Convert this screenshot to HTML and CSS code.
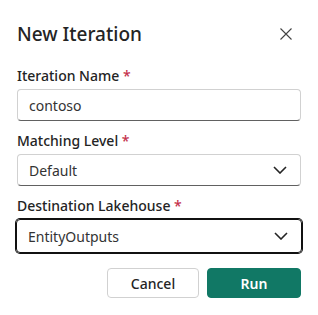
FILE: index.html
```html
<!DOCTYPE html>
<html>
<head>
    <title>New Iteration</title>
    <link rel="stylesheet" href="styles.css">
</head>
<body>
    <div class="dialog">
        <div class="dialog-header">
            <h1 class="dialog-title">New Iteration</h1>
            <button class="close-btn" aria-label="Close">
                <svg width="12" height="12" viewBox="0 0 12 12">
                    <path d="M0.5 0.5 L11.5 11.5 M11.5 0.5 L0.5 11.5" stroke="#424242" stroke-width="1.1" fill="none"/>
                </svg>
            </button>
        </div>

        <div class="field">
            <label for="name">Iteration Name <span class="req">*</span></label>
            <div class="control">
                <input type="text" id="name" value="contoso">
            </div>
        </div>

        <div class="field">
            <label>Matching Level <span class="req">*</span></label>
            <div class="control dropdown">
                <span>Default</span>
                <svg class="chevron" width="14" height="8" viewBox="0 0 14 8">
                    <path d="M1 1 L7 7 L13 1" stroke="#242424" stroke-width="1.6" fill="none"/>
                </svg>
            </div>
        </div>

        <div class="field">
            <label>Destination Lakehouse <span class="req">*</span></label>
            <div class="control dropdown focused">
                <span>EntityOutputs</span>
                <svg class="chevron" width="14" height="8" viewBox="0 0 14 8">
                    <path d="M1 1 L7 7 L13 1" stroke="#242424" stroke-width="1.6" fill="none"/>
                </svg>
            </div>
        </div>

        <div class="actions">
            <button class="btn">Cancel</button>
            <button class="btn primary">Run</button>
        </div>
    </div>
</body>
</html>
```

FILE: styles.css
```css
body {
    margin: 0;
    background: #fff;
    font-family: "Noto Sans", "Open Sans", sans-serif;
    color: #242424;
}
.dialog {
    padding: 20px 17px 0 17px;
}
.dialog-header {
    display: flex;
    justify-content: space-between;
    align-items: center;
    margin-bottom: 18px;
}
.dialog-title {
    margin: 0;
    font-size: 19px;
    font-weight: 500;
    line-height: 28px;
}
.close-btn {
    border: none;
    background: none;
    padding: 0;
    margin-right: 9px;
    width: 12px;
    height: 12px;
    display: flex;
}
.field {
    margin-bottom: 10px;
}
label {
    display: block;
    font-size: 14px;
    font-weight: 500;
    line-height: 20px;
    margin-bottom: 3px;
}
.req {
    color: #c4314b;
}
.control {
    height: 32px;
    box-sizing: border-box;
    border: 1px solid #d1d1d1;
    border-bottom-color: #616161;
    border-radius: 4px;
    display: flex;
    align-items: center;
    padding: 0 13px 0 11px;
    color: #333;
}
.control input {
    border: none;
    outline: none;
    padding: 0;
    width: 100%;
    font-family: inherit;
    font-size: 14px;
    color: #333;
    background: transparent;
}
.dropdown {
    justify-content: space-between;
    font-size: 14px;
}
.focused {
    border: 1px solid #111;
    box-shadow: 0 0 0 1px #111;
    margin: 0 -1px;
    height: 34px;
}
.actions {
    display: flex;
    justify-content: flex-end;
    gap: 8px;
    margin-top: 15px;
}
.btn {
    width: 92px;
    height: 30px;
    border: 1px solid #d1d1d1;
    border-radius: 4px;
    background: #fff;
    font-family: inherit;
    font-size: 14px;
    font-weight: 500;
    color: #242424;
}
.btn.primary {
    width: 94px;
    background: #117865;
    border-color: #117865;
    color: #fff;
    font-weight: 600;
}
```
